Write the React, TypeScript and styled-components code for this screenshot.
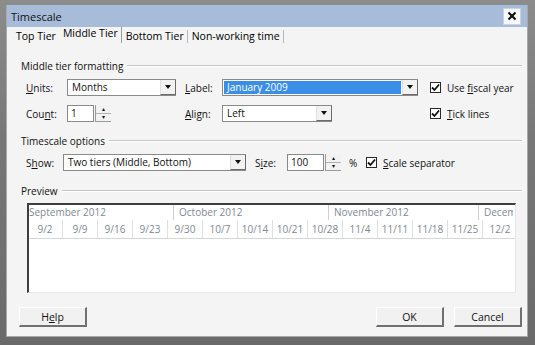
import React from "react";
import styled, { createGlobalStyle } from "styled-components";

const GlobalStyle = createGlobalStyle`
  html, body {
    margin: 0;
    padding: 0;
  }
  body {
    width: 535px;
    height: 345px;
    overflow: hidden;
    background: #6e6e6e;
    font-family: "Open Sans", "Noto Sans", sans-serif;
    font-size: 10px;
    color: #111;
  }
`;

const Frame = styled.div`
  width: 535px;
  height: 345px;
  box-sizing: border-box;
  padding: 5px 7px 0 6px;
  background: linear-gradient(#8c8c8c, #777 40%, #6a6a6a);
`;

const Window = styled.div`
  height: 332px;
  box-sizing: border-box;
  border: 1px solid #a8a8a8;
  border-top: none;
  background: #f4f4f4;
  display: flex;
  flex-direction: column;
`;

const TitleBar = styled.div`
  height: 22px;
  display: flex;
  align-items: center;
  justify-content: space-between;
  padding: 0 6px 0 4px;
  background: #a6bcd9;
  font-size: 11px;
`;

const CloseButton = styled.div`
  width: 16px;
  height: 15px;
  display: flex;
  align-items: center;
  justify-content: center;
  background: #f6f8fb;
  border: 1px solid #c9d3e0;
`;

const Tabs = styled.div`
  height: 18px;
  display: flex;
  align-items: center;
  padding-left: 5px;
`;

const Tab = styled.div<{ $active?: boolean }>`
  padding: 0 3px 0 2px;
  margin-left: 2px;
  font-size: 10.5px;
  line-height: 13px;
  color: #000;
  border-right: 1px solid ${(p) => (p.$active ? "#9a9a9a" : "#b8b8b8")};
  margin-top: ${(p) => (p.$active ? "-3px" : "0")};
  padding-bottom: ${(p) => (p.$active ? "3px" : "0")};
  &:first-child {
    border-right: none;
    padding-right: 3px;
  }
`;

const Panel = styled.div`
  display: flex;
  flex-direction: column;
  padding: 0 5px 0 14px;
`;

const GroupHeader = styled.div<{ $top: number }>`
  display: flex;
  align-items: center;
  gap: 4px;
  height: 12px;
  margin-top: ${(p) => p.$top}px;
  &::after {
    content: "";
    flex: 1;
    height: 1px;
    background: #c6c6c6;
    border-bottom: 1px solid #fff;
  }
`;

const FieldGrid = styled.div`
  margin: 7px 0 0 5px;
  display: grid;
  grid-template-columns: 41px 118px 37px 208px auto;
  grid-auto-rows: 17px;
  row-gap: 9px;
  align-items: center;
`;

const Row = styled.div`
  margin: 7px 0 0 5px;
  height: 17px;
  display: flex;
  align-items: center;
`;

const FieldLabel = styled.span<{ $width?: number; $gap?: number }>`
  width: ${(p) => (p.$width ? `${p.$width}px` : "auto")};
  margin-left: ${(p) => p.$gap || 0}px;
  flex: none;
  white-space: nowrap;
`;

const Key = styled.span`
  text-decoration: underline;
`;

const Combo = styled.div<{ $width: number }>`
  width: ${(p) => p.$width}px;
  height: 17px;
  box-sizing: border-box;
  display: flex;
  border: 1px solid #8a8a8a;
  border-right: none;
  background: #fff;
`;

const ComboText = styled.div<{ $selected?: boolean }>`
  flex: 1;
  margin: 1px;
  padding-left: 3px;
  line-height: 13px;
  white-space: nowrap;
  overflow: hidden;
  background: ${(p) => (p.$selected ? "#3a8ee6" : "transparent")};
  color: ${(p) => (p.$selected ? "#fff" : "#111")};
`;

const ArrowButton = styled.div`
  width: 16px;
  flex: none;
  display: flex;
  align-items: center;
  justify-content: center;
  background: #f2f2f2;
  border-left: 1px solid #e0e0e0;
  border-right: 1px solid #6a6a6a;
  border-bottom: 1px solid #6a6a6a;
  box-sizing: border-box;
`;

const Arrow = styled.div`
  width: 0;
  height: 0;
  border-left: 3.5px solid transparent;
  border-right: 3.5px solid transparent;
  border-top: 4px solid #111;
`;

const SpinBox = styled.div`
  display: flex;
  align-items: stretch;
  height: 17px;
  gap: 1px;
`;

const SpinInput = styled.div<{ $width: number }>`
  width: ${(p) => p.$width}px;
  box-sizing: border-box;
  border: 1px solid #8a8a8a;
  background: #fff;
  padding-left: 3px;
  line-height: 15px;
`;

const SpinButtons = styled.div`
  width: 16px;
  display: flex;
  flex-direction: column;
  border-left: 1px solid #9a9a9a;
  border-bottom: 1px solid #9a9a9a;
  box-sizing: border-box;
`;

const SpinButton = styled.div`
  flex: 1;
  display: flex;
  align-items: center;
  justify-content: center;
  font-size: 6px;
  line-height: 1;
  background: #f2f2f2;
  &:first-child {
    border-bottom: 1px solid #b0b0b0;
  }
`;

const Check = styled.label`
  display: flex;
  align-items: center;
  gap: 6px;
  white-space: nowrap;
`;

const CheckBox = styled.span`
  width: 11px;
  height: 11px;
  box-sizing: border-box;
  border: 1px solid #2a2a2a;
  background: #fff;
  display: flex;
  align-items: center;
  justify-content: center;
`;

const Preview = styled.div`
  margin: 6px 0 0 6px;
  width: 489px;
  height: 90px;
  box-sizing: border-box;
  border-top: 2px solid #3e3e3e;
  border-left: 2px solid #3e3e3e;
  border-right: 1px solid #e6e6e6;
  border-bottom: 1px solid #e6e6e6;
  background: #fff;
  overflow: hidden;
`;

const MonthTrack = styled.div`
  display: flex;
  margin-left: -6px;
  height: 15px;
`;

const Month = styled.div<{ $days: number }>`
  flex: none;
  width: ${(p) => p.$days * 5}px;
  box-sizing: border-box;
  border-left: 1px solid #cfcfcf;
  padding-left: 5px;
  line-height: 15px;
  color: #7f8896;
  white-space: nowrap;
  overflow: hidden;
`;

const WeekTrack = styled.div`
  display: flex;
  margin-left: -1px;
  height: 18px;
  border-bottom: 1px solid #d6d6d6;
`;

const Week = styled.div`
  flex: none;
  width: 35px;
  box-sizing: border-box;
  text-align: center;
  line-height: 18px;
  color: #7f8896;
  border-right: 1px solid #e0e0e0;
`;

const Footer = styled.div`
  margin-top: 14px;
  display: flex;
  align-items: center;
  padding: 0 5px 0 12px;
`;

const Button = styled.div<{ $push?: boolean }>`
  width: 68px;
  height: 20px;
  box-sizing: border-box;
  display: flex;
  align-items: center;
  justify-content: center;
  font-size: 10.5px;
  background: #f1f1f1;
  border-top: 1px solid #fff;
  border-left: 1px solid #fff;
  border-right: 2px solid #707070;
  border-bottom: 2px solid #707070;
  margin-left: ${(p) => (p.$push ? "auto" : "10px")};
  &:first-child {
    margin-left: 0;
  }
`;

const Tick = () => (
  <svg width="9" height="9" viewBox="0 0 9 9">
    <path d="M1 4.5 L3.5 7 L8 1.5" fill="none" stroke="#111" strokeWidth="1.8" />
  </svg>
);

const Checkbox: React.FC<{ children: React.ReactNode }> = ({ children }) => (
  <Check>
    <CheckBox>
      <Tick />
    </CheckBox>
    <span>{children}</span>
  </Check>
);

const ComboBox: React.FC<{ width: number; value: string; selected?: boolean }> = (props) => (
  <Combo $width={props.width}>
    <ComboText $selected={props.selected}>{props.value}</ComboText>
    <ArrowButton>
      <Arrow />
    </ArrowButton>
  </Combo>
);

const Spinner: React.FC<{ width: number; value: string }> = (props) => (
  <SpinBox>
    <SpinInput $width={props.width}>{props.value}</SpinInput>
    <SpinButtons>
      <SpinButton>▴</SpinButton>
      <SpinButton>▾</SpinButton>
    </SpinButtons>
  </SpinBox>
);

// last month only shows its first days in the preview
const months = [
  { name: "September 2012", days: 30 },
  { name: "October 2012", days: 31 },
  { name: "November 2012", days: 30 },
  { name: "Decem", days: 7 },
];

const weeks = ["9/2", "9/9", "9/16", "9/23", "9/30", "10/7", "10/14", "10/21", "10/28", "11/4", "11/11", "11/18", "11/25", "12/2"];

const App: React.FC = () => {
  return (
    <Frame>
      <GlobalStyle />
      <Window>
        <TitleBar>
          <span>Timescale</span>
          <CloseButton>
            <svg width="10" height="10" viewBox="0 0 10 10">
              <path d="M1.5 1.5 L8.5 8.5 M8.5 1.5 L1.5 8.5" stroke="#111" strokeWidth="2.2" />
            </svg>
          </CloseButton>
        </TitleBar>
        <Tabs>
          <Tab>Top Tier</Tab>
          <Tab $active>Middle Tier</Tab>
          <Tab>Bottom Tier</Tab>
          <Tab>Non-working time</Tab>
        </Tabs>
        <Panel>
          <GroupHeader $top={15}>Middle tier formatting</GroupHeader>
          <FieldGrid>
            <FieldLabel><Key>U</Key>nits:</FieldLabel>
            <ComboBox width={109} value="Months" />
            <FieldLabel><Key>L</Key>abel:</FieldLabel>
            <ComboBox width={196} value="January 2009" selected />
            <Checkbox>Use <Key>f</Key>iscal year</Checkbox>

            <FieldLabel>Cou<Key>n</Key>t:</FieldLabel>
            <Spinner width={27} value="1" />
            <FieldLabel><Key>A</Key>lign:</FieldLabel>
            <ComboBox width={110} value="Left" />
            <Checkbox><Key>T</Key>ick lines</Checkbox>
          </FieldGrid>

          <GroupHeader $top={13}>Timescale options</GroupHeader>
          <Row>
            <FieldLabel $width={37}>S<Key>h</Key>ow:</FieldLabel>
            <ComboBox width={183} value="Two tiers (Middle, Bottom)" />
            <FieldLabel $width={32} $gap={9}>S<Key>i</Key>ze:</FieldLabel>
            <Spinner width={37} value="100" />
            <FieldLabel $width={17} $gap={8}>%</FieldLabel>
            <Checkbox><Key>S</Key>cale separator</Checkbox>
          </Row>

          <GroupHeader $top={14}>Preview</GroupHeader>
          <Preview>
            <MonthTrack>
              {months.map((m) => (
                <Month key={m.name} $days={m.days}>{m.name}</Month>
              ))}
            </MonthTrack>
            <WeekTrack>
              {weeks.map((w) => (
                <Week key={w}>{w}</Week>
              ))}
            </WeekTrack>
          </Preview>
        </Panel>
        <Footer>
          <Button>H<Key>e</Key>lp</Button>
          <Button $push>OK</Button>
          <Button>Cancel</Button>
        </Footer>
      </Window>
    </Frame>
  );
};

export default App;
